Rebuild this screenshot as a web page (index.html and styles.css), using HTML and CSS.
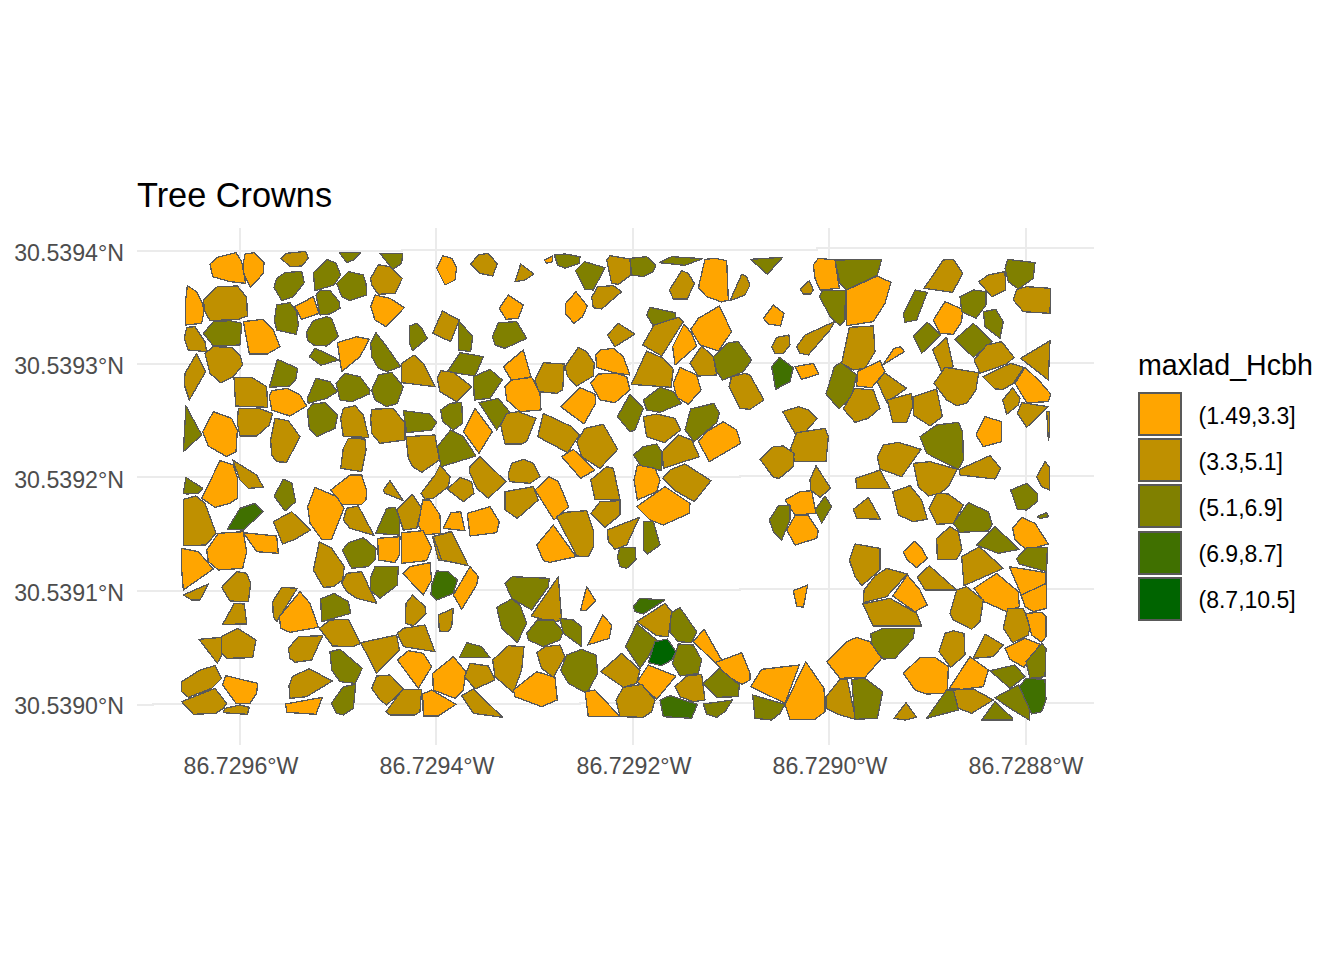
FILE: index.html
```html
<!DOCTYPE html>
<html lang="en">
<head>
<meta charset="utf-8">
<title>Tree Crowns</title>
<link rel="stylesheet" href="styles.css">
</head>
<body>
<main class="figure">
<section class="plot">
<h1 class="title">Tree Crowns</h1>
<svg class="chart" viewBox="0 220 1138 570" width="1138" height="570" role="img" aria-label="Map of tree crowns">
<g class="grid">
<path d="M137 250.5H402V249.5H817V248H1094"/>
<path d="M137 364H630V362.7H1094"/>
<path d="M137 477.3H283V476.7H740V475.5H1094"/>
<path d="M137 590.7H430V590H740V589.3H1094"/>
<path d="M137 704.7H153V703.7H580V702.5H1094"/>
<path d="M240 228V745"/>
<path d="M436 228V745"/>
<path d="M633 228V745"/>
<path d="M829 228V745"/>
<path d="M1025.500 228V745"/>
</g>
<g class="crowns" transform="translate(130 240) scale(.33333)">
<polygon class="a" points="240,72 262,52 318,38 335,65 347,130 300,125 248,110"/>
<polygon class="a" points="340,70 345,42 372,38 402,68 400,100 362,142 342,105"/>
<polygon class="b" points="453,55 470,40 527,34 535,55 515,78 480,80"/>
<polygon class="c" points="628,38 692,38 670,60 650,68"/>
<polygon class="c" points="750,40 818,40 815,70 788,88"/>
<polygon class="c" points="432,142 440,115 465,98 515,94 523,128 490,170 455,182"/>
<polygon class="c" points="550,98 592,58 618,70 632,105 612,135 555,152"/>
<polygon class="c" points="620,130 655,95 700,105 708,130 710,165 660,182 635,170"/>
<polygon class="b" points="722,115 745,74 780,80 817,115 795,160 745,163 725,135"/>
<polygon class="a" points="722,200 735,165 780,175 823,203 768,260 735,240"/>
<polygon class="a" points="172,137 200,155 218,190 222,215 215,250 167,255 167,180"/>
<polygon class="b" points="220,180 262,140 322,138 350,172 352,228 325,238 240,242 225,215"/>
<polygon class="a" points="494,200 550,170 567,220 515,238"/>
<polygon class="c" points="558,165 570,150 600,152 628,185 630,205 600,222 570,225"/>
<polygon class="c" points="440,195 480,188 500,215 505,255 498,283 440,270 433,240"/>
<polygon class="c" points="220,280 250,245 300,242 335,250 330,315 250,318"/>
<polygon class="a" points="340,245 398,238 430,270 450,320 412,342 358,342"/>
<polygon class="b" points="163,295 170,262 195,260 225,305 230,335 175,330"/>
<polygon class="c" points="530,275 550,242 590,230 605,235 625,290 590,318 550,315 532,300"/>
<polygon class="b" points="225,340 250,320 305,322 330,345 338,375 310,410 272,428 240,400"/>
<polygon class="a" points="622,308 680,290 718,298 690,350 635,395"/>
<polygon class="c" points="722,310 738,278 770,320 812,380 770,395 745,385 725,350"/>
<polygon class="c" points="538,350 555,325 590,340 626,360 572,376"/>
<polygon class="c" points="838,258 860,250 875,265 892,295 848,332 838,310"/>
<polygon class="b" points="165,400 200,340 227,395 178,480 163,435"/>
<polygon class="c" points="418,442 442,358 503,385 497,420 480,438"/>
<polygon class="b" points="312,412 365,412 410,440 413,502 317,498"/>
<polygon class="b" points="815,370 852,345 880,370 915,440 815,428"/>
<polygon class="a" points="418,470 425,452 472,445 510,465 530,498 480,528 425,510"/>
<polygon class="c" points="532,475 558,415 600,425 622,455 590,475 535,490"/>
<polygon class="c" points="618,430 645,400 690,410 720,450 718,462 665,485 630,480"/>
<polygon class="c" points="725,450 745,405 785,397 820,440 802,490 770,500 735,480"/>
<polygon class="c" points="160,635 168,498 215,585"/>
<polygon class="a" points="218,575 250,515 305,535 322,570 318,635 290,650 235,618"/>
<polygon class="b" points="322,550 325,505 385,505 428,520 418,555 380,588 330,588"/>
<polygon class="c" points="532,510 548,492 585,488 623,525 615,565 560,590 538,565"/>
<polygon class="b" points="632,535 640,505 675,497 700,525 716,592 640,590"/>
<polygon class="b" points="722,535 725,508 790,505 825,550 825,600 750,610 725,580"/>
<polygon class="c" points="820,512 900,522 920,548 905,570 830,578"/>
<polygon class="b" points="422,600 435,535 475,542 510,590 470,667 440,665 425,645"/>
<polygon class="b" points="632,685 640,625 655,595 705,597 708,630 695,695"/>
<polygon class="b" points="828,590 915,585 928,660 875,697 848,680 835,655"/>
</g>
<g class="crowns" transform="translate(430 240) scale(.33333)">
<polygon class="a" points="20,85 38,47 65,55 80,82 75,120 45,135"/>
<polygon class="b" points="122,72 145,45 175,40 202,72 188,108 150,100"/>
<polygon class="b" points="255,125 272,72 312,102 285,120"/>
<polygon class="a" points="343,60 368,47 368,65 350,70"/>
<polygon class="c" points="373,45 405,42 450,50 448,70 405,85 383,75"/>
<polygon class="c" points="436,92 463,65 525,83 490,150 465,148"/>
<polygon class="b" points="530,60 540,47 600,57 603,105 565,133 545,130"/>
<polygon class="c" points="600,55 650,50 678,75 670,95 640,110 605,105"/>
<polygon class="c" points="688,68 725,50 818,56 765,76"/>
<polygon class="b" points="718,150 755,92 775,100 793,130 772,177 730,177"/>
<polygon class="a" points="808,130 825,58 855,55 890,62 895,180 875,186 830,170 806,145"/>
<polygon class="b" points="900,182 935,103 950,110 960,135 945,165"/>
<polygon class="b" points="485,172 503,140 550,137 575,155 515,207 490,203"/>
<polygon class="a" points="208,205 235,165 280,195 265,235 228,238"/>
<polygon class="a" points="407,190 438,155 472,198 458,230 432,250 407,222"/>
<polygon class="b" points="8,280 37,213 88,240 62,305"/>
<polygon class="c" points="85,240 128,290 122,335 85,330"/>
<polygon class="c" points="187,290 205,248 260,245 290,295 225,325 195,315"/>
<polygon class="b" points="532,285 565,250 615,282 555,320"/>
<polygon class="c" points="650,225 660,202 735,218 738,242 668,255"/>
<polygon class="b" points="638,315 672,255 745,232 760,245 695,348"/>
<polygon class="a" points="728,320 762,252 785,280 800,318 735,375"/>
<polygon class="a" points="782,268 805,235 868,198 905,275 865,333 810,315"/>
<polygon class="b" points="780,370 815,318 850,350 860,405 805,408"/>
<polygon class="c" points="850,350 895,308 925,305 965,360 940,395 878,420 860,395"/>
<polygon class="c" points="52,395 90,338 160,350 135,408"/>
<polygon class="a" points="220,380 280,330 303,410 245,422"/>
<polygon class="b" points="315,420 340,368 403,372 398,450 380,460 325,455"/>
<polygon class="b" points="405,380 445,322 470,335 493,370 490,408 440,438 413,410"/>
<polygon class="a" points="497,345 510,330 550,325 580,350 600,405 550,398 500,382"/>
<polygon class="b" points="604,433 650,333 700,355 730,388 723,442"/>
<polygon class="a" points="730,430 750,382 800,405 813,450 775,493 740,472"/>
<polygon class="b" points="22,415 32,392 70,397 125,440 80,485 30,455"/>
<polygon class="c" points="130,410 180,388 217,420 180,475 133,480"/>
<polygon class="a" points="225,440 245,420 305,412 330,460 333,510 270,515 230,480"/>
<polygon class="a" points="482,430 505,402 560,400 590,410 600,450 555,488 510,480"/>
<polygon class="a" points="392,500 450,443 495,462 497,490 462,552"/>
<polygon class="c" points="640,480 690,442 730,455 755,490 690,517 650,510"/>
<polygon class="b" points="897,440 905,410 945,400 960,405 1002,480 960,508 930,505"/>
<polygon class="c" points="147,488 205,475 238,515 200,570"/>
<polygon class="c" points="32,510 60,490 95,487 98,550 70,570 38,545"/>
<polygon class="b" points="212,555 230,520 265,515 318,535 290,605 275,612 225,612"/>
<polygon class="c" points="562,530 600,462 640,505 615,570 600,575"/>
<polygon class="a" points="100,575 135,505 187,575 147,640"/>
<polygon class="c" points="22,620 62,570 100,590 138,648 33,680"/>
<polygon class="b" points="323,590 340,520 425,560 448,585 413,638"/>
<polygon class="b" points="440,605 465,565 520,553 563,628 510,685 455,650"/>
<polygon class="a" points="395,650 430,628 495,690 452,715"/>
<polygon class="c" points="610,645 640,620 680,612 695,635 695,690 640,688"/>
<polygon class="b" points="640,530 680,522 735,535 752,570 703,608 650,590"/>
<polygon class="c" points="765,570 782,507 852,490 868,520 860,548 792,605"/>
<polygon class="a" points="805,605 830,575 880,545 920,570 932,610 838,665"/>
<polygon class="b" points="697,635 745,585 785,600 808,650 700,685"/>
</g>
<g class="crowns" transform="translate(740 240) scale(.33333)">
<polygon class="c" points="32,58 128,52 82,103"/>
<polygon class="a" points="220,75 235,55 285,60 298,145 240,150 225,115"/>
<polygon class="c" points="285,60 425,58 412,105 320,150 300,130"/>
<polygon class="b" points="180,147 208,122 220,150 212,162 190,162"/>
<polygon class="a" points="320,150 412,108 453,127 435,190 400,245 320,257"/>
<polygon class="c" points="238,170 248,150 316,152 315,240 300,257 272,232"/>
<polygon class="a" points="70,235 100,195 132,220 122,258 85,252"/>
<polygon class="b" points="95,320 110,292 147,285 150,315 130,340 105,340"/>
<polygon class="b" points="170,320 195,285 283,245 270,270 205,345 180,340"/>
<polygon class="b" points="328,262 400,258 405,335 375,385 340,390 305,370"/>
<polygon class="b" points="552,145 610,60 640,58 668,100 638,157"/>
<polygon class="c" points="795,85 803,58 885,68 880,115 835,147 805,125"/>
<polygon class="b" points="716,125 745,105 795,95 797,150 755,170"/>
<polygon class="b" points="820,180 830,148 860,140 932,145 930,220 850,215"/>
<polygon class="c" points="490,222 525,150 562,157 530,240 495,247"/>
<polygon class="a" points="580,240 615,185 668,208 665,245 640,283 600,280"/>
<polygon class="c" points="660,170 700,150 738,155 738,195 708,235 665,215"/>
<polygon class="c" points="730,215 767,208 790,245 780,295 735,260"/>
<polygon class="c" points="520,288 562,247 603,285 545,340"/>
<polygon class="c" points="645,298 700,250 757,305 700,352"/>
<polygon class="b" points="578,330 620,292 640,380 605,395"/>
<polygon class="b" points="702,360 740,315 785,305 822,352 800,372 720,400"/>
<polygon class="b" points="842,355 930,302 925,420"/>
<polygon class="a" points="428,375 462,325 482,320 493,335"/>
<polygon class="a" points="352,395 420,362 435,395 395,443 350,438"/>
<polygon class="d" points="95,380 118,352 160,383 150,425 107,448"/>
<polygon class="a" points="165,380 220,370 237,402 185,418"/>
<polygon class="c" points="258,462 283,380 303,367 350,405 335,470 297,507"/>
<polygon class="b" points="412,425 433,398 500,445 440,487"/>
<polygon class="b" points="582,430 615,382 716,398 708,450 680,490 650,497 620,480"/>
<polygon class="b" points="728,410 812,370 852,382 820,430 790,448 765,447"/>
<polygon class="a" points="825,430 855,382 900,425 932,462 925,485 860,488"/>
<polygon class="b" points="310,507 345,445 400,450 420,505 385,535 345,547"/>
<polygon class="b" points="442,480 515,460 518,500 500,547 458,547"/>
<polygon class="b" points="520,470 590,447 607,530 570,558 520,525"/>
<polygon class="b" points="788,480 818,443 840,475 835,495 800,523"/>
<polygon class="b" points="832,520 845,488 925,500 860,562"/>
<polygon class="b" points="920,515 928,515 928,590 925,600"/>
<polygon class="b" points="128,515 175,500 205,510 232,535 192,580 165,580"/>
<polygon class="b" points="152,625 170,578 255,565 265,590 258,665 165,665"/>
<polygon class="b" points="60,658 100,620 130,618 162,640 160,680 118,715 100,712"/>
<polygon class="c" points="540,590 590,555 655,547 668,575 670,660 655,688 560,640"/>
<polygon class="a" points="708,585 735,530 785,545 785,605 730,620"/>
<polygon class="b" points="412,650 430,615 475,607 543,628 485,710 420,687"/>
</g>
<g class="crowns" transform="translate(130 470) scale(.33333)">
<polygon class="c" points="160,70 168,22 218,55 205,70 170,72"/>
<polygon class="a" points="215,85 270,-28 310,-15 323,25 322,85 300,100 255,112"/>
<polygon class="b" points="308,-30 380,15 400,52 355,55 330,30"/>
<polygon class="c" points="432,78 460,28 485,38 497,95 465,123"/>
<polygon class="a" points="602,60 660,15 695,15 710,60 708,90 695,103 635,103"/>
<polygon class="b" points="760,60 780,32 820,92 765,70"/>
<polygon class="b" points="873,70 915,15 930,-15 960,20 955,50 910,85 885,88"/>
<polygon class="b" points="160,88 198,78 225,100 258,190 228,225 160,227"/>
<polygon class="d" points="292,178 330,115 375,100 400,125 340,180"/>
<polygon class="b" points="430,155 485,125 542,180 495,208 458,222"/>
<polygon class="a" points="533,110 555,52 620,80 642,115 605,208 575,208 540,160"/>
<polygon class="b" points="640,150 650,115 685,108 732,196 660,175"/>
<polygon class="c" points="737,190 770,115 795,112 808,135 808,195"/>
<polygon class="b" points="800,120 847,73 875,115 860,175 820,180"/>
<polygon class="a" points="865,165 878,90 900,90 930,135 932,190 880,195"/>
<polygon class="b" points="908,200 960,185 960,275 925,270"/>
<polygon class="a" points="340,188 440,198 445,250 380,245"/>
<polygon class="a" points="230,240 265,190 340,185 350,245 338,295 265,300 235,275"/>
<polygon class="a" points="155,235 205,245 250,297 160,360 155,300"/>
<polygon class="a" points="743,205 810,200 808,255 795,278 745,270"/>
<polygon class="a" points="815,188 880,182 905,235 890,272 815,280"/>
<polygon class="c" points="637,240 655,218 700,203 738,235 735,270 715,290 665,295"/>
<polygon class="b" points="550,300 568,215 605,235 643,290 638,330 610,350 580,352"/>
<polygon class="c" points="722,322 735,290 805,290 802,345 750,385 722,362"/>
<polygon class="a" points="818,310 840,290 900,278 905,330 880,375"/>
<polygon class="b" points="635,340 650,310 695,305 740,400 680,385 650,365"/>
<polygon class="b" points="160,375 235,342 210,390 185,390"/>
<polygon class="b" points="275,352 320,305 350,310 362,340 355,395 300,393"/>
<polygon class="b" points="278,463 313,400 343,402 350,462"/>
<polygon class="b" points="428,395 455,352 502,355 440,455 430,440"/>
<polygon class="a" points="448,440 510,365 540,400 565,472 480,487 452,475"/>
<polygon class="c" points="572,387 612,370 655,395 662,430 575,455"/>
<polygon class="b" points="828,400 848,375 885,410 888,432 850,467 826,460"/>
<polygon class="b" points="568,475 600,450 655,448 692,520 670,530 608,528"/>
<polygon class="b" points="802,490 820,475 885,465 915,545 820,530"/>
<polygon class="b" points="692,518 800,495 808,540 740,610"/>
<polygon class="a" points="802,570 835,542 880,550 905,590 865,655"/>
<polygon class="b" points="207,508 275,502 275,555 262,580"/>
<polygon class="b" points="275,500 323,475 378,510 368,563 290,565 275,550"/>
<polygon class="b" points="475,535 505,500 578,497 545,570 495,577 480,565"/>
<polygon class="c" points="600,545 630,538 697,595 675,640 630,635 605,600"/>
<polygon class="b" points="155,635 210,600 255,587 275,625 245,655 175,682 155,665"/>
<polygon class="b" points="155,695 255,655 290,700 280,715 258,730 190,733"/>
<polygon class="a" points="278,645 287,617 383,640 380,670 360,700 318,700"/>
<polygon class="b" points="285,715 330,705 358,712 352,733 280,728"/>
<polygon class="b" points="477,648 487,620 537,596 607,633 530,680 480,685"/>
<polygon class="a" points="467,702 577,682 558,733 470,727"/>
<polygon class="c" points="604,700 640,650 677,643 670,715 640,735 620,730"/>
<polygon class="b" points="725,655 740,618 780,615 822,658 770,705 750,690"/>
<polygon class="b" points="768,725 818,658 875,658 870,725 855,735 780,735"/>
<polygon class="a" points="878,672 905,660 978,703 925,738 880,738"/>
</g>
<g class="crowns" transform="translate(430 470) scale(.33333)">
<polygon class="b" points="118,5 120,-10 150,-40 228,35 175,85 140,55"/>
<polygon class="b" points="235,10 245,-20 280,-32 310,-20 330,20 300,40 238,35"/>
<polygon class="a" points="315,60 357,20 385,35 416,110 372,150"/>
<polygon class="b" points="225,65 310,50 325,90 262,145 225,120"/>
<polygon class="b" points="482,30 530,-10 550,-5 570,88 495,88"/>
<polygon class="b" points="483,130 510,95 570,92 570,135 525,172"/>
<polygon class="a" points="620,110 705,50 780,100 778,130 700,165 660,150"/>
<polygon class="b" points="532,180 628,142 590,225 555,238 535,215"/>
<polygon class="c" points="640,155 670,155 690,225 652,252 640,240"/>
<polygon class="c" points="562,260 570,233 615,232 618,270 590,295 570,290"/>
<polygon class="a" points="612,30 622,-15 675,-5 690,30 680,65 622,90"/>
<polygon class="b" points="698,25 720,0 765,-18 843,32 793,95 735,62"/>
<polygon class="b" points="380,140 405,127 470,122 490,180 490,230 475,260 440,258"/>
<polygon class="a" points="320,225 370,165 438,260 360,277 340,272"/>
<polygon class="a" points="40,175 62,128 92,125 105,182"/>
<polygon class="a" points="112,130 180,110 208,155 200,188 120,198"/>
<polygon class="b" points="52,58 90,22 125,35 132,70 100,95"/>
<polygon class="b" points="10,200 65,185 115,287 35,270"/>
<polygon class="a" points="70,375 120,290 145,320 140,345 95,418"/>
<polygon class="d" points="5,345 20,303 55,305 82,330 70,370 20,390 3,375"/>
<polygon class="b" points="25,435 70,415 65,470 55,485 28,483"/>
<polygon class="c" points="225,340 247,320 358,325 355,350 305,420 245,385"/>
<polygon class="b" points="303,438 385,320 395,450 370,457"/>
<polygon class="a" points="452,420 470,350 497,392 467,422"/>
<polygon class="c" points="200,412 245,387 270,405 290,460 262,518 215,475"/>
<polygon class="c" points="290,490 322,450 370,450 400,485 390,510 340,530 295,510"/>
<polygon class="c" points="390,445 430,450 455,470 455,530 400,490"/>
<polygon class="a" points="473,525 518,435 545,465 538,505"/>
<polygon class="d" points="610,410 630,385 705,390 640,432 615,425"/>
<polygon class="c" points="720,430 750,413 800,485 785,518 745,515 722,490"/>
<polygon class="b" points="620,455 705,400 725,425 715,500 680,497"/>
<polygon class="c" points="587,530 620,460 680,510 655,560 630,595"/>
<polygon class="e" points="655,578 675,515 712,507 738,545 725,570 695,587"/>
<polygon class="a" points="790,515 822,477 875,570 855,578"/>
<polygon class="c" points="88,562 110,518 155,530 180,563"/>
<polygon class="b" points="188,570 235,527 282,530 275,600 250,668 195,620"/>
<polygon class="b" points="320,548 345,530 390,525 405,560 370,622 335,595"/>
<polygon class="c" points="392,600 410,555 455,538 498,555 503,610 470,670 415,640"/>
<polygon class="b" points="512,605 575,550 630,600 620,640 580,652"/>
<polygon class="a" points="622,635 655,585 738,618 680,688"/>
<polygon class="c" points="727,580 745,522 790,525 815,570 805,610 750,618"/>
<polygon class="a" points="855,578 935,548 960,610 960,630 935,643 895,620"/>
<polygon class="c" points="820,640 868,595 928,645 925,680 860,682"/>
<polygon class="b" points="735,650 770,618 815,613 825,690 790,695 750,680"/>
<polygon class="a" points="8,610 70,560 108,605 100,660 75,685 10,660"/>
<polygon class="b" points="104,620 120,580 175,588 195,630 135,657"/>
<polygon class="a" points="250,660 320,605 375,622 382,690 335,710 255,680"/>
<polygon class="b" points="95,677 130,657 218,742 130,730"/>
<polygon class="a" points="465,665 495,660 570,740 475,740"/>
<polygon class="b" points="558,690 580,652 635,643 675,690 665,725 640,742 570,740"/>
<polygon class="d" points="690,690 720,677 802,703 785,745 700,740"/>
<polygon class="c" points="820,702 908,690 885,725 860,742 830,732"/>
</g>
<g class="crowns" transform="translate(740 470) scale(.33333)">
<polygon class="b" points="520,-20 570,-25 652,-2 625,50 600,70 565,78 535,50"/>
<polygon class="b" points="658,-2 750,-43 782,-5 765,27 720,22 660,15"/>
<polygon class="b" points="347,25 420,0 450,55 350,55"/>
<polygon class="b" points="210,30 228,-13 272,55 240,82 212,60"/>
<polygon class="b" points="890,20 915,-25 928,-10 928,60 905,50"/>
<polygon class="a" points="135,90 180,65 215,62 228,130 165,135"/>
<polygon class="a" points="140,180 165,137 205,137 235,182 230,205 165,225"/>
<polygon class="c" points="88,150 115,107 150,105 150,150 125,210 100,185"/>
<polygon class="c" points="225,120 255,78 275,110 245,160"/>
<polygon class="b" points="340,118 385,82 422,148 350,145"/>
<polygon class="b" points="458,65 510,47 545,90 562,148 520,155 475,135"/>
<polygon class="b" points="567,115 590,70 625,72 670,105 640,160 590,163"/>
<polygon class="c" points="640,160 685,98 745,125 757,163 745,183 660,187"/>
<polygon class="b" points="590,205 630,170 655,185 666,240 650,268 592,268"/>
<polygon class="c" points="812,60 860,40 892,70 892,95 860,120 832,118"/>
<polygon class="c" points="892,140 920,127 925,140 900,146"/>
<polygon class="a" points="818,175 845,142 885,160 925,222 860,240 825,210"/>
<polygon class="c" points="710,225 765,170 838,238 775,250"/>
<polygon class="a" points="490,245 525,213 545,235 562,265 530,293 502,270"/>
<polygon class="b" points="328,270 345,222 420,235 420,300 365,347 345,320"/>
<polygon class="b" points="532,322 568,287 650,360 555,360"/>
<polygon class="b" points="665,260 718,230 790,295 672,347"/>
<polygon class="c" points="830,265 862,232 922,232 920,305 838,282"/>
<polygon class="b" points="372,360 405,318 440,295 502,312 440,380 370,398"/>
<polygon class="a" points="458,378 502,315 540,360 562,405 525,425"/>
<polygon class="a" points="160,362 203,345 190,412 170,408"/>
<polygon class="a" points="702,355 770,310 835,365 838,410 800,425 732,395"/>
<polygon class="b" points="630,430 650,360 680,350 730,390 720,455 695,478 640,450"/>
<polygon class="a" points="808,290 918,308 918,340 845,378"/>
<polygon class="a" points="843,375 920,340 920,415 880,425 855,410"/>
<polygon class="b" points="368,402 450,385 530,430 545,468 400,468"/>
<polygon class="b" points="790,475 803,415 850,415 870,470 865,495 818,518"/>
<polygon class="a" points="858,430 905,427 918,440 918,500 905,517 875,495"/>
<polygon class="c" points="392,492 428,475 524,475 520,505 465,565 430,567 398,535"/>
<polygon class="b" points="597,545 615,490 640,482 672,490 675,555 632,592"/>
<polygon class="b" points="700,565 735,492 790,525 760,560"/>
<polygon class="a" points="795,535 855,505 900,523 852,592 810,568"/>
<polygon class="c" points="858,575 905,520 918,535 915,620 870,625"/>
<polygon class="a" points="260,575 320,515 350,502 390,515 425,565 375,622 300,625"/>
<polygon class="a" points="490,610 540,562 585,562 625,590 622,670 560,672 525,660"/>
<polygon class="a" points="628,655 690,560 745,600 730,650 665,658"/>
<polygon class="c" points="750,602 825,585 855,620 810,655"/>
<polygon class="b" points="640,660 700,657 760,690 695,730 655,715"/>
<polygon class="c" points="560,745 620,660 640,660 655,720"/>
<polygon class="b" points="258,680 300,628 322,628 347,748 300,735 258,715"/>
<polygon class="c" points="335,628 375,625 428,665 412,745 345,748"/>
<polygon class="a" points="32,650 65,598 178,585 135,700"/>
<polygon class="a" points="135,705 197,575 252,655 255,725 225,748 150,748"/>
<polygon class="c" points="38,675 135,703 120,730 95,750 45,745"/>
<polygon class="b" points="462,745 498,698 530,742 495,750"/>
<polygon class="c" points="765,683 835,645 870,720 868,750 810,715"/>
<polygon class="d" points="838,650 858,625 915,628 918,690 905,725 875,732"/>
<polygon class="c" points="725,750 765,695 818,745 818,750"/>
</g>
<g class="ticks">
<text class="ylab" x="124" y="261">30.5394°N</text>
<text class="ylab" x="124" y="374">30.5393°N</text>
<text class="ylab" x="124" y="488">30.5392°N</text>
<text class="ylab" x="124" y="601">30.5391°N</text>
<text class="ylab" x="124" y="714">30.5390°N</text>
<text class="xlab" x="241" y="774">86.7296°W</text>
<text class="xlab" x="437" y="774">86.7294°W</text>
<text class="xlab" x="634" y="774">86.7292°W</text>
<text class="xlab" x="830" y="774">86.7290°W</text>
<text class="xlab" x="1026" y="774">86.7288°W</text>
</g>
</svg>
</section>
<aside class="legend">
<h2 class="legend-title">maxlad_Hcbh</h2>
<ul class="legend-list">
<li class="legend-row"><span class="key a"></span><span class="legend-label">(1.49,3.3]</span></li>
<li class="legend-row"><span class="key b"></span><span class="legend-label">(3.3,5.1]</span></li>
<li class="legend-row"><span class="key c"></span><span class="legend-label">(5.1,6.9]</span></li>
<li class="legend-row"><span class="key d"></span><span class="legend-label">(6.9,8.7]</span></li>
<li class="legend-row"><span class="key e"></span><span class="legend-label">(8.7,10.5]</span></li>
</ul>
</aside>
</main>
</body>
</html>
```
FILE: styles.css
```css
html, body {
  margin: 0;
  padding: 0;
  background: #fff;
}
.figure {
  display: flex;
  width: 1344px;
  height: 960px;
  overflow: hidden;
  font-family: "Liberation Sans", Arial, sans-serif;
  color: #000;
}
.plot {
  width: 1138px;
  flex: none;
}
.title {
  margin: 0;
  height: 220px;
  box-sizing: border-box;
  padding: 175px 0 0 137px;
  font-size: 34.3px;
  line-height: 40px;
  font-weight: 400;
}
.chart {
  display: block;
}
.grid path {
  fill: none;
  stroke: #ebebeb;
  stroke-width: 2;
  shape-rendering: crispEdges;
}
.crowns polygon {
  stroke: #595959;
  stroke-width: 1.3;
  vector-effect: non-scaling-stroke;
  stroke-linejoin: round;
  shape-rendering: crispEdges;
}
.a { fill: #ffa500; background: #ffa500; }
.b { fill: #bf9000; background: #bf9000; }
.c { fill: #808000; background: #808000; }
.d { fill: #407000; background: #407000; }
.e { fill: #006400; background: #006400; }
.ticks text {
  font-size: 23.2px;
  fill: #4d4d4d;
}
.ylab { text-anchor: end; }
.xlab { text-anchor: middle; }
.legend {
  padding-top: 347px;
}
.legend-title {
  margin: 0 0 9px;
  font-size: 28.6px;
  line-height: 36px;
  font-weight: 400;
}
.legend-list {
  list-style: none;
  margin: 0;
  padding: 0;
  display: flex;
  flex-direction: column;
  gap: 2.2px;
}
.legend-row {
  display: flex;
  align-items: center;
  gap: 16.5px;
  font-size: 23px;
}
.legend-label {
  padding-top: 4px;
}
.key {
  width: 44px;
  height: 44px;
  box-sizing: border-box;
  border: 2px solid #595959;
}
```
